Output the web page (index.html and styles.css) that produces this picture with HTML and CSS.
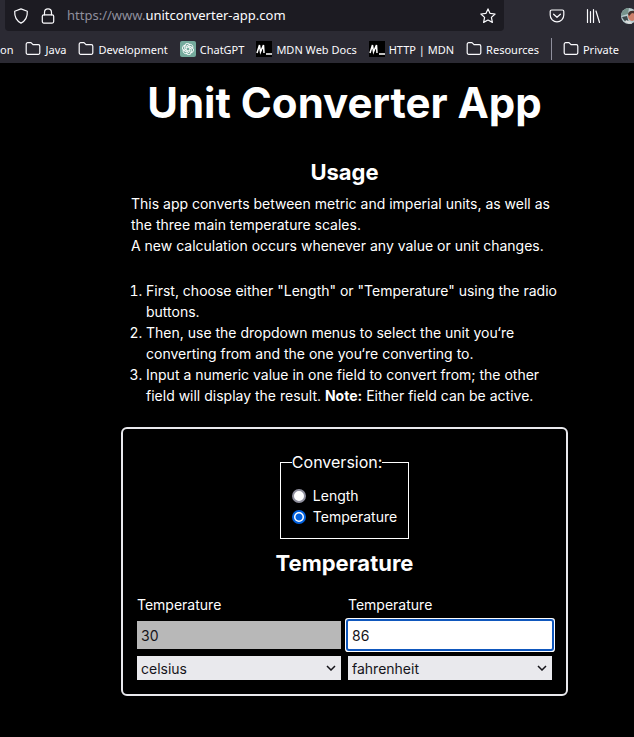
FILE: index.html
```html
<!DOCTYPE html>
<html lang="en">
<head>
<meta charset="utf-8">
<meta name="viewport" content="width=device-width, initial-scale=1">
<title>Unit Converter App</title>
<link rel="stylesheet" href="styles.css">
</head>
<body>
<header class="browser">
  <div class="toolbar">
    <div class="address">
      <svg class="icon" viewBox="0 0 16 16" aria-hidden="true"><path d="M8 .9 14.3 3.200C14.600 8.500 12.300 12.800 8 15.100 3.700 12.800 1.400 8.500 1.700 3.200Z"/></svg>
      <svg class="icon" viewBox="0 0 16 16" aria-hidden="true"><rect x="2.300" y="6.800" width="11.400" height="8.300" rx="1.500"/><path d="M4.500 6.800V4.400a3.500 3.500 0 0 1 7 0v2.400"/></svg>
      <span class="url">https://www.<b>unitconverter-app.com</b></span>
      <svg class="icon" viewBox="0 0 16 16" aria-hidden="true"><path d="M8 .9l2.100 4.500 5 .6-3.700 3.400 1 5L8 12l-4.400 2.400 1-5L.9 6l5-.6Z"/></svg>
    </div>
    <div class="actions">
      <svg class="icon" viewBox="0 0 16 16" aria-hidden="true"><path d="M2.700 2h10.600a1.500 1.500 0 0 1 1.500 1.500V7a6.800 6.800 0 0 1-13.600 0V3.500A1.500 1.500 0 0 1 2.700 2ZM4.600 6.200 8 9.300l3.400-3.100"/></svg>
      <svg class="icon" viewBox="0 0 16 16" aria-hidden="true"><path d="M2.500 1.500v13M5.500 3.500v11M8.500 1.500v13M11 3l3.500 11.500"/></svg>
      <svg class="avatar" viewBox="0 0 16 16" aria-hidden="true"><circle cx="8" cy="8" r="8" fill="#b9cdd0"/><path d="M1 4Q4 0 8 0L7 6 0 8Z" fill="#76938c"/><path d="M1 9l5-1 2 7Q3 14 1 9Z" fill="#3b484b"/><ellipse cx="11" cy="8" rx="4" ry="5" fill="#cc806b"/><path d="M7 6Q8 2 14 3l1 3-4-1-3 3Z" fill="#45342f"/><path d="M5 12l5 2 1 2Q7 16 4 14Z" fill="#ddd"/></svg>
    </div>
  </div>
  <nav class="bookmarks">
    <a href="#">on</a>
    <a href="#"><svg class="icon" viewBox="0 0 16 16" aria-hidden="true"><path d="M1.200 11.800V3.200A1.500 1.500 0 0 1 2.700 1.700H6l2 2h5.300a1.500 1.500 0 0 1 1.500 1.500v6.600a1.500 1.500 0 0 1-1.500 1.500H2.700a1.500 1.500 0 0 1-1.500-1.500Z"/></svg>Java</a>
    <a href="#"><svg class="icon" viewBox="0 0 16 16" aria-hidden="true"><path d="M1.200 11.800V3.200A1.500 1.500 0 0 1 2.700 1.700H6l2 2h5.300a1.500 1.500 0 0 1 1.500 1.500v6.600a1.500 1.500 0 0 1-1.500 1.500H2.700a1.500 1.500 0 0 1-1.500-1.500Z"/></svg>Development</a>
    <a href="#"><svg class="favicon" viewBox="0 0 16 16" aria-hidden="true"><rect width="16" height="16" rx="2" fill="#74aa9c"/><g fill="none" stroke="#fff" stroke-width=".9"><path id="petal" d="M6.200 9V5.300l2.900-1.700c2.600-1.200 4.900 1.800 3.200 4"/><use href="#petal" transform="rotate(60 8 8)"/><use href="#petal" transform="rotate(120 8 8)"/><use href="#petal" transform="rotate(180 8 8)"/><use href="#petal" transform="rotate(240 8 8)"/><use href="#petal" transform="rotate(300 8 8)"/></g></svg>ChatGPT</a>
    <a href="#"><svg class="favicon" viewBox="0 0 16 16" aria-hidden="true"><path fill="#000" d="M0 0h16v16H0z"/><path d="M1 12 3.500 4 4.500 11 7.500 4 8 12M10 13h6" fill="none" stroke="#fff" stroke-width="1.500"/></svg>MDN Web Docs</a>
    <a href="#"><svg class="favicon" viewBox="0 0 16 16" aria-hidden="true"><path fill="#000" d="M0 0h16v16H0z"/><path d="M1 12 3.500 4 4.500 11 7.500 4 8 12M10 13h6" fill="none" stroke="#fff" stroke-width="1.500"/></svg>HTTP | MDN</a>
    <a href="#"><svg class="icon" viewBox="0 0 16 16" aria-hidden="true"><path d="M1.200 11.800V3.200A1.500 1.500 0 0 1 2.700 1.700H6l2 2h5.300a1.500 1.500 0 0 1 1.500 1.500v6.600a1.500 1.500 0 0 1-1.500 1.500H2.700a1.500 1.500 0 0 1-1.500-1.500Z"/></svg>Resources</a>
    <a href="#" class="private"><svg class="icon" viewBox="0 0 16 16" aria-hidden="true"><path d="M1.200 11.800V3.200A1.500 1.500 0 0 1 2.700 1.700H6l2 2h5.300a1.500 1.500 0 0 1 1.500 1.500v6.600a1.500 1.500 0 0 1-1.500 1.500H2.700a1.500 1.500 0 0 1-1.500-1.500Z"/></svg>Private</a>
  </nav>
</header>
<main class="page">
  <h1>Unit Converter App</h1>
  <section class="usage">
    <h2>Usage</h2>
    <p>This app converts between metric and imperial units, as well as the three main temperature scales.<br>A new calculation occurs whenever any value or unit changes.</p>
    <ol>
      <li>First, choose either "Length" or "Temperature" using the radio buttons.</li>
      <li>Then, use the dropdown menus to select the unit you‘re converting from and the one you‘re converting to.</li>
      <li>Input a numeric value in one field to convert from; the other field will display the result. <strong>Note:</strong> Either field can be active.</li>
    </ol>
  </section>
  <form class="converter">
    <fieldset>
      <legend>Conversion:</legend>
      <label><input type="radio" name="kind" value="length">Length</label>
      <label><input type="radio" name="kind" value="temperature" checked>Temperature</label>
    </fieldset>
    <h2>Temperature</h2>
    <div class="fields">
      <div class="field">
        <label for="from">Temperature</label>
        <input class="value inactive" id="from" type="text" inputmode="decimal" value="30">
        <select aria-label="From unit"><option>celsius</option><option>fahrenheit</option><option>kelvin</option></select>
      </div>
      <div class="field">
        <label for="to">Temperature</label>
        <input class="value active" id="to" type="text" inputmode="decimal" value="86">
        <select aria-label="To unit"><option>fahrenheit</option><option>celsius</option><option>kelvin</option></select>
      </div>
    </div>
  </form>
</main>
</body>
</html>
```
FILE: styles.css
```css
* { box-sizing: border-box; }

body {
  margin: 0;
  background: #000;
  color: #fff;
  font: 14px/21px Inter, "Liberation Sans", sans-serif;
  overflow-x: hidden;
}

.browser {
  background: #2b2a33;
  color: #fbfbfe;
  font-family: "Noto Sans", "Open Sans", sans-serif;
  overflow: hidden;
}

.icon {
  width: 16px;
  height: 16px;
  flex: none;
  fill: none;
  stroke: #fbfbfe;
  stroke-width: 1.2;
  stroke-linejoin: round;
  stroke-linecap: round;
}

.toolbar { display: flex; height: 31px; }

.address {
  flex: 1;
  display: flex;
  align-items: center;
  gap: 11px;
  margin-left: 5px;
  padding: 0 8px;
  border-radius: 0 0 4px 4px;
  background: #1c1b22;
}

.url {
  flex: 1;
  color: #8f8f9d;
  font-size: 13px;
}

.url b { color: #fbfbfe; font-weight: 400; }

.actions {
  display: flex;
  align-items: center;
  gap: 20px;
  width: 130px;
  padding-left: 45px;
}

.avatar { width: 16px; height: 16px; flex: none; }

.bookmarks {
  display: flex;
  align-items: center;
  gap: 12px;
  height: 32px;
  padding-top: 4px;
  font-size: 11px;
  white-space: nowrap;
}

.bookmarks a {
  display: flex;
  align-items: center;
  gap: 4px;
  color: inherit;
  text-decoration: none;
}

.favicon { width: 16px; height: 16px; flex: none; }

.bookmarks .private {
  height: 22px;
  padding-left: 11px;
  border-left: 1px solid #8f8f9d;
}

.page {
  width: 100%;
  max-width: 502px;
  margin: 0 auto;
  padding: 10px 0 40px 55px;
}

h1, h2 { margin: 0; text-align: center; font-weight: 700; }
h1 { font-size: 42px; line-height: 60px; }
h2 { font-size: 22px; line-height: 34px; }

.usage { padding: 22px 10px 0; }
.usage p { margin: 4px 0 24px; }
.usage ol { margin: 0; padding-left: 15px; }

.converter {
  margin-top: 21px;
  padding: 20px 14px 14px;
  border: 2px solid #e9e9ed;
  border-radius: 6px;
}

fieldset {
  width: fit-content;
  margin: 0 auto 7px;
  padding: 10px 11px 11px;
  border: 1px solid #fff;
}

legend { padding: 0; font-size: 16px; line-height: 26px; }

fieldset label { display: flex; align-items: center; gap: 7px; }

input[type="radio"] {
  appearance: none;
  width: 14px;
  height: 14px;
  margin: 0;
  border: 2px solid #8f8f9d;
  border-radius: 50%;
  background: #fff;
}

input[type="radio"]:checked {
  border-color: #0060df;
  background: radial-gradient(circle, #0060df 3px, #fff 4px);
}

.fields { display: grid; grid-template-columns: 1fr 1fr; gap: 7px; margin-top: 14px; }
.field { display: flex; flex-direction: column; min-width: 0; }
.field label { margin-bottom: 6px; }

.value, select {
  width: 100%;
  border: 0;
  border-radius: 0;
  color: #15141a;
  font: inherit;
}

.value { height: 28px; margin-bottom: 7px; padding: 0 4px; }
.inactive { background: #b8b8b8; }
.active { background: #fff; outline: 2px solid #0f57bd; box-shadow: 0 0 0 3px #fff; border-radius: 1px; }

select {
  height: 24px;
  padding: 0 4px;
  appearance: none;
  background: #e9e9ed url("data:image/svg+xml,%3Csvg xmlns='http://www.w3.org/2000/svg' width='10' height='6'%3E%3Cpath d='M1 1l4 4 4-4' fill='none' stroke='%2315141a' stroke-width='1.500'/%3E%3C/svg%3E") no-repeat right 5px center;
}
```
